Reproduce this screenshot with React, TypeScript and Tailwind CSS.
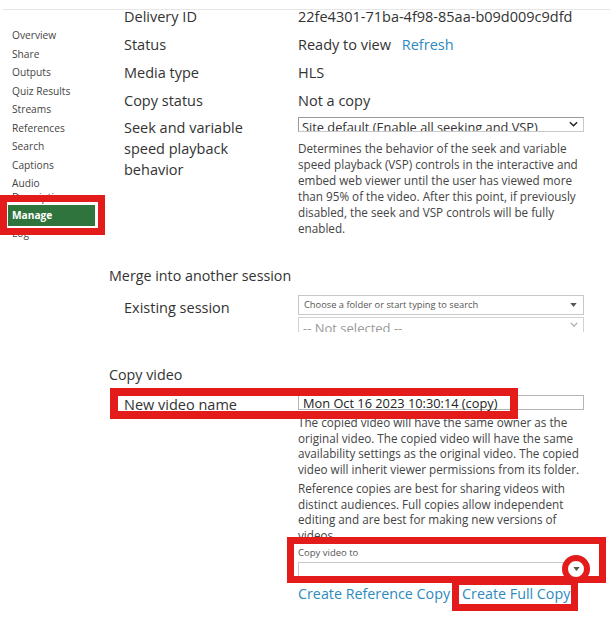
import type { ReactNode } from "react";

const NAV = ["Overview", "Share", "Outputs", "Quiz Results", "Streams", "References", "Search", "Captions"];

function Chevron({ className }: { className?: string }) {
  return (
    <svg viewBox="0 0 10 6" className={className} fill="none" stroke="currentColor" strokeWidth="1.6">
      <polyline points="1,1 5,5 9,1" />
    </svg>
  );
}

function Caret({ className }: { className?: string }) {
  return (
    <svg viewBox="0 0 8 5" className={className} fill="currentColor">
      <polygon points="0,0 8,0 4,5" />
    </svg>
  );
}

function Row({ label, children, className = "" }: { label: ReactNode; children: ReactNode; className?: string }) {
  return (
    <div className={`grid grid-cols-[174px_286px] pl-[15px] ${className}`}>
      <div className="text-[14.5px] text-[#333]">{label}</div>
      <div className="text-[14.5px] text-[#333]">{children}</div>
    </div>
  );
}

export default function App() {
  return (
    <div className="relative h-[621px] w-[610px] overflow-hidden bg-white font-['Open_Sans','Noto_Sans',sans-serif] text-[#333]">
      <div className="mt-[9px] ml-[3px] flex border-t border-[#e6e6e6]">
        {/* left nav */}
        <nav className="w-[106px] shrink-0 pl-[9px] pt-[16px] text-[10.2px] text-[#444]">
          {NAV.map((item) => (
            <div key={item} className="leading-[18.5px]">
              {item}
            </div>
          ))}
          <div className="h-[31px] pt-[2px] leading-[14px]">
            Audio
            <br />
            Descriptions
          </div>
          <div className="-ml-[4px] h-[21px] w-[87px] bg-[#2f743c] pl-[4px] font-bold leading-[21px] text-white">Manage</div>
          <div className="leading-[15px]">Log</div>
        </nav>

        {/* main */}
        <main className="-mt-[7px] flex-1">
          <Row label={<span className="leading-[28px]">Delivery ID</span>}>
            <span className="leading-[28px]">22fe4301-71ba-4f98-85aa-b09d009c9dfd</span>
          </Row>
          <Row label={<span className="leading-[28px]">Status</span>}>
            <span className="leading-[28px]">
              Ready to view <span className="ml-[7px] text-[#2d8ac0]">Refresh</span>
            </span>
          </Row>
          <Row label={<span className="leading-[28px]">Media type</span>}>
            <span className="leading-[28px]">HLS</span>
          </Row>
          <Row label={<span className="leading-[28px]">Copy status</span>}>
            <span className="leading-[28px]">Not a copy</span>
          </Row>
          <Row
            className="pt-[2px]"
            label={<div className="leading-[21px]">Seek and variable<br />speed playback<br />behavior</div>}
          >
            <div className="relative h-[15px] overflow-hidden border border-[#9a9a9a] border-r-[#c8c8c8] border-b-[#c8c8c8]">
              <div className="pl-[3px] text-[12.8px] leading-[19px] whitespace-nowrap">Site default (Enable all seeking and VSP)</div>
              <Chevron className="absolute right-[5px] top-[3px] h-[6px] w-[9px] text-[#222]" />
            </div>
            <p className="mt-[8px] text-[11.7px] leading-[16px] text-[#444]">
              Determines the behavior of the seek and variable speed playback (VSP) controls in the interactive and embed
              web viewer until the user has viewed more than 95% of the video. After this point, if previously disabled,
              the seek and VSP controls will be fully enabled.
            </p>
          </Row>

          <h2 className="mt-[29px] text-[14.3px] leading-[22px]">Merge into another session</h2>
          <Row
            className="mt-[8px]"
            label={<div className="pt-[2px] leading-[22px]">Existing session</div>}
          >
            <div className="relative flex h-[20px] items-center whitespace-nowrap border border-[#c8c8c8] pl-[5px] text-[9.3px] text-[#555]">
              Choose a folder or start typing to search
              <Caret className="absolute right-[6px] top-[7px] h-[4px] w-[7px] text-[#555]" />
            </div>
            <div className="relative mt-[2px] h-[15px] overflow-hidden whitespace-nowrap border-x border-t border-[#d2d2d2] pl-[4px] text-[13px] leading-[21px] text-[#9a9a9a]">
              -- Not selected --
              <Chevron className="absolute right-[5px] top-[4px] h-[5px] w-[8px] text-[#aaa]" />
            </div>
          </Row>

          <h2 className="mt-[32px] text-[14.3px] leading-[22px]">Copy video</h2>
          <Row
            className="mt-[8px]"
            label={<div className="leading-[22px]">New video name</div>}
          >
            <div className="mt-[1px] h-[15px] whitespace-nowrap border border-[#b5b5b5] pl-[4px] text-[12.8px] leading-[14px] text-[#222]">
              Mon Oct 16 2023 10:30:14 (copy)
            </div>
            <div className="mt-[5px] text-[11.7px] leading-[15.5px] text-[#444]">
              <p>
                The copied video will have the same owner as the original video. The copied video will have the same
                availability settings as the original video. The copied video will inherit viewer permissions from its
                folder.
              </p>
              <p className="mt-[4px]">
                Reference copies are best for sharing videos with distinct audiences. Full copies allow independent
                editing and are best for making new versions of videos.
              </p>
            </div>
            <div className="mt-[3px] text-[9.5px] leading-[14px] text-[#555]">Copy video to</div>
            <div className="relative mt-[2px] h-[17px] border border-[#c8c8c8]">
              <Caret className="absolute right-[5px] top-[5px] h-[4px] w-[7px] text-[#555]" />
            </div>
            <div className="mt-[5px] flex gap-[12px] whitespace-nowrap text-[14.3px] leading-[20px] text-[#2d8ac0]">
              <span>Create Reference Copy</span>
              <span>Create Full Copy</span>
            </div>
          </Row>
        </main>
      </div>

      {/* annotation overlays */}
      <div className="absolute left-0 top-[195px] h-[40px] w-[105px] border-[7px] border-[#e31b1b]" />
      <div className="absolute left-[110px] top-[388px] h-[31px] w-[408px] border-[8px] border-[#e31b1b]" />
      <div className="absolute left-[287px] top-[537px] h-[46px] w-[319px] border-[7px] border-[#e31b1b]" />
      <div className="absolute left-[452px] top-[578px] h-[33px] w-[126px] border-[7px] border-[#e31b1b]" />
      <div className="absolute left-[562px] top-[555px] flex h-[28px] w-[28px] items-center justify-center rounded-full border-[6px] border-[#e31b1b] bg-white">
        <Caret className="h-[4px] w-[7px] text-[#555]" />
      </div>
    </div>
  );
}
